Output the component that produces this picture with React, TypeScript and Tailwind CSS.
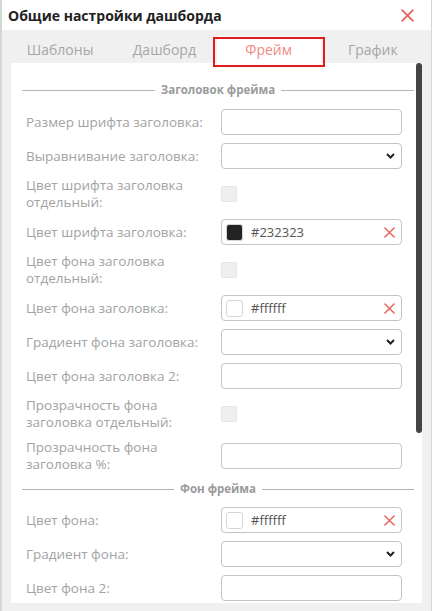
import React from 'react';

type Row =
  | { kind: 'text'; label: string }
  | { kind: 'select'; label: string }
  | { kind: 'check'; label: string }
  | { kind: 'color'; label: string; value: string; swatch: string };

const headerRows: Row[] = [
  { kind: 'text', label: 'Размер шрифта заголовка:' },
  { kind: 'select', label: 'Выравнивание заголовка:' },
  { kind: 'check', label: 'Цвет шрифта заголовка отдельный:' },
  { kind: 'color', label: 'Цвет шрифта заголовка:', value: '#232323', swatch: '#232323' },
  { kind: 'check', label: 'Цвет фона заголовка отдельный:' },
  { kind: 'color', label: 'Цвет фона заголовка:', value: '#ffffff', swatch: '#ffffff' },
  { kind: 'select', label: 'Градиент фона заголовка:' },
  { kind: 'text', label: 'Цвет фона заголовка 2:' },
  { kind: 'check', label: 'Прозрачность фона заголовка отдельный:' },
  { kind: 'text', label: 'Прозрачность фона заголовка %:' },
];

const backgroundRows: Row[] = [
  { kind: 'color', label: 'Цвет фона:', value: '#ffffff', swatch: '#ffffff' },
  { kind: 'select', label: 'Градиент фона:' },
  { kind: 'text', label: 'Цвет фона 2:' },
];

const tabs = ['Шаблоны', 'Дашборд', 'Фрейм', 'График'];

function CloseIcon({ size, className }: { size: number; className?: string }) {
  return (
    <svg width={size} height={size} viewBox="0 0 12 12" className={className}>
      <path d="M1 1 L11 11 M11 1 L1 11" stroke="currentColor" strokeWidth="1.6" strokeLinecap="round" />
    </svg>
  );
}

function Field({ row }: { row: Row }) {
  if (row.kind === 'check') {
    return <div className="h-4 w-4 rounded-[2px] border border-[#e6e6e6] bg-[#efefef]" />;
  }
  if (row.kind === 'select') {
    return (
      <div className="flex h-[26px] w-[181px] items-center justify-end rounded-[4px] border border-[#c4c4c4] bg-white pr-[6px]">
        <svg width="9" height="6" viewBox="0 0 9 6">
          <path d="M1 1 L4.5 4.5 L8 1" fill="none" stroke="#222" strokeWidth="2" />
        </svg>
      </div>
    );
  }
  if (row.kind === 'color') {
    return (
      <div className="flex h-[26px] w-[181px] items-center rounded-[4px] border border-[#c4c4c4] bg-white pl-[4px] pr-[6px]">
        <div
          className="h-[17px] w-[17px] rounded-[3px] border border-[#d6d6d6]"
          style={{ backgroundColor: row.swatch }}
        />
        <span className="ml-[8px] flex-1 text-[13px] leading-none text-[#555]">{row.value}</span>
        <CloseIcon size={11} className="text-[#e8615a]" />
      </div>
    );
  }
  return <div className="h-[26px] w-[181px] rounded-[4px] border border-[#c4c4c4] bg-white" />;
}

function SettingRow({ row }: { row: Row }) {
  return (
    <div className="flex items-center pl-[4px]">
      <div className="w-[195px] pr-[10px] text-[13.5px] leading-[17px] text-[#a3a3a3]">{row.label}</div>
      <Field row={row} />
    </div>
  );
}

function Legend({ title }: { title: string }) {
  return (
    <div className="flex h-4 items-center">
      <div className="h-px flex-1 bg-[#b5b5b5]" />
      <span className="px-[6px] text-[11.5px] font-bold leading-none text-[#9b9b9b]">{title}</span>
      <div className="h-px flex-1 bg-[#b5b5b5]" />
    </div>
  );
}

export default function App() {
  return (
    <div
      className="flex h-[611px] w-[432px] flex-col overflow-hidden border-l-2 border-r border-[#d2d8d6] bg-[#f0f0f0]"
      style={{ fontFamily: '"Open Sans", "Liberation Sans", sans-serif' }}
    >
      <div className="flex h-[30px] shrink-0 items-center justify-between bg-white pl-[6px] pr-[17px]">
        <h1 className="text-[14px] font-bold text-[#222]">Общие настройки дашборда</h1>
        <CloseIcon size={13} className="text-[#e8615a]" />
      </div>

      <div className="flex shrink-0 pl-[6px] pr-[6px] pt-[6px]">
        {tabs.map((tab) => {
          const active = tab === 'Фрейм';
          return (
            <div
              key={tab}
              className={
                active
                  ? 'relative flex h-[27px] flex-1 items-center justify-center bg-white text-[14px] text-[#f08a82]'
                  : 'relative flex h-[27px] flex-1 items-center justify-center text-[14px] text-[#a6a6a6]'
              }
            >
              {tab}
              {active && (
                <div className="absolute -left-[4px] -right-[4px] top-[1px] -bottom-[4px] z-10 border-2 border-[#e41b1b]" />
              )}
            </div>
          );
        })}
      </div>

      <div className="relative mx-[9px] h-[540px] shrink-0 overflow-hidden bg-white pl-[11px] pr-[8px] pt-[19px]">
        <div className="absolute right-0 top-0 h-[370px] w-[6px] rounded-full bg-[#444]" />
        <Legend title="Заголовок фрейма" />
        <div className="mt-[11px] flex flex-col gap-[8px]">
          {headerRows.map((row) => (
            <SettingRow key={row.label} row={row} />
          ))}
        </div>
        <div className="mt-[8px]">
          <Legend title="Фон фрейма" />
        </div>
        <div className="mt-[10px] flex flex-col gap-[8px]">
          {backgroundRows.map((row) => (
            <SettingRow key={row.label} row={row} />
          ))}
        </div>
      </div>
    </div>
  );
}
